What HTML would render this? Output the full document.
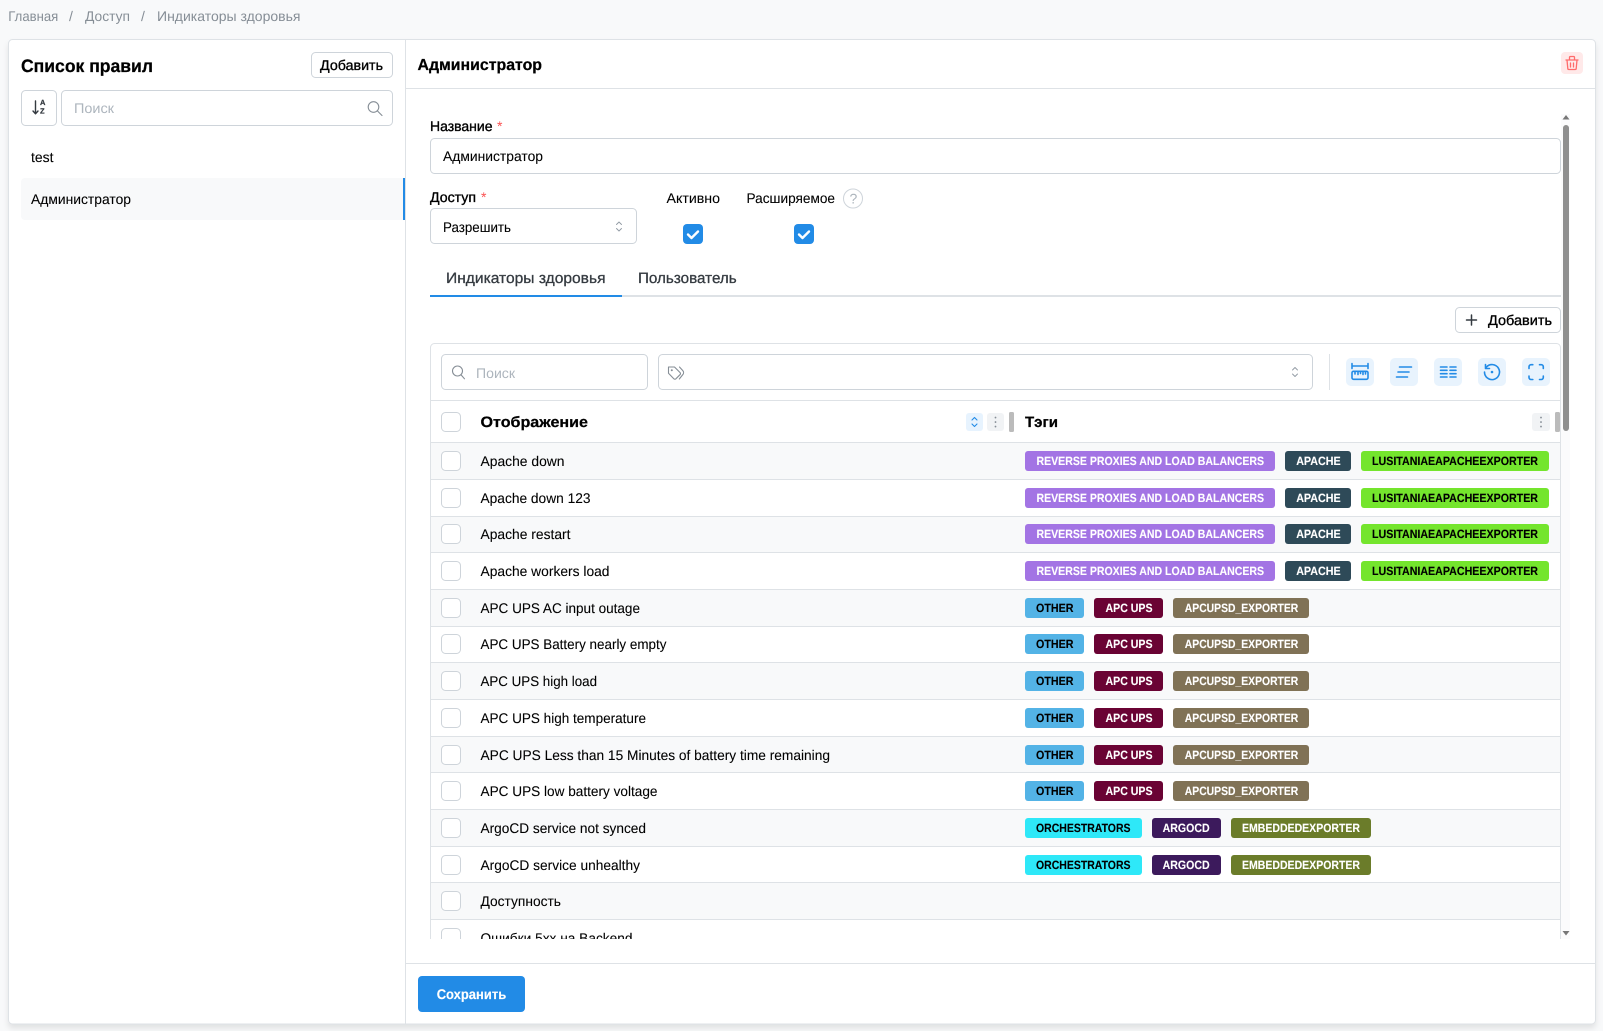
<!DOCTYPE html>
<html lang="ru"><head><meta charset="utf-8"><title>Индикаторы здоровья</title>
<style>
html,body{margin:0;padding:0;background:#f8f9fa;width:1603px;height:1031px;overflow:hidden}
svg{display:block}
text{font-family:"Liberation Sans",sans-serif;font-size:14px;fill:#000;stroke:#000;stroke-width:.08;text-rendering:geometricPrecision}
.g{fill:#868e96;stroke:none}.p{fill:#adb5bd;stroke:none}.m{stroke:#000;stroke-width:.35}.b{font-weight:700;stroke-width:.25}
.t{font-size:12px;font-weight:700;fill:#fff;stroke:#fff;stroke-width:.12}.k{fill:#000;stroke:#000}
.a{fill:#fa5252;stroke:none}.tb{font-size:15px;fill:#343a40;stroke:#343a40;stroke-width:.3}
.i{fill:none;stroke:#228be6;stroke-width:1.6;stroke-linecap:round;stroke-linejoin:round}
.n{fill:none;stroke:#868e96;stroke-width:1.1;stroke-linecap:round;stroke-linejoin:round}
.c{fill:none;stroke:#909aa3;stroke-width:.9;stroke-linecap:round;stroke-linejoin:round}
.f{fill:#fff;stroke:#ced4da}.l{fill:#dee2e6}.z{fill:#f8f9fa}
</style></head><body>
<svg xmlns="http://www.w3.org/2000/svg" width="1603" height="1031" viewBox="0 0 1603 1031">
<defs><clipPath id="c"><rect x="430" y="343" width="1131" height="596"/></clipPath></defs>

<!-- breadcrumbs -->
<text class="g" x="8.3" y="21" textLength="50" lengthAdjust="spacingAndGlyphs">Главная</text>
<text class="g" x="69" y="21">/</text>
<text class="g" x="85" y="21" textLength="45" lengthAdjust="spacingAndGlyphs">Доступ</text>
<text class="g" x="141" y="21">/</text>
<text class="g" x="157" y="21" textLength="143.500" lengthAdjust="spacingAndGlyphs">Индикаторы здоровья</text>

<!-- panel -->
<rect x="8.5" y="39.500" width="1587" height="984.500" rx="4" fill="#fff" stroke="#dee2e6" style="filter:drop-shadow(0 4px 3px rgba(0,0,0,.09))"/>
<rect class="l" x="405" y="40" width="1" height="984"/>

<!-- left column -->
<text class="b k" style="font-size:18px" x="21" y="72" textLength="132" lengthAdjust="spacingAndGlyphs">Список правил</text>
<rect class="f" x="311.500" y="52.500" width="81" height="25" rx="4"/>
<text class="m" x="320" y="70" textLength="63" lengthAdjust="spacingAndGlyphs">Добавить</text>
<rect class="f" x="21.500" y="90.500" width="35" height="35" rx="4"/>
<path d="M35.500 101v12.500M33 111l2.500 2.800 2.500-2.800" fill="none" stroke="#343a40" stroke-width="1.400" stroke-linecap="round" stroke-linejoin="round"/>
<text class="b" style="font-size:7.500px;fill:#343a40;stroke:#343a40" x="40" y="105">A</text>
<text class="b" style="font-size:7.500px;fill:#343a40;stroke:#343a40" x="40" y="113.500">Z</text>
<rect class="f" x="61.500" y="90.500" width="331" height="35" rx="4"/>
<text class="p" x="74" y="113" textLength="40" lengthAdjust="spacingAndGlyphs">Поиск</text>
<circle class="n" cx="373.500" cy="107" r="5.300"/><path class="n" d="M377.500 111l4.500 4.500"/>
<text x="31" y="162" textLength="22.500" lengthAdjust="spacingAndGlyphs">test</text>
<path class="z" d="M25 178H405V220H25a4 4 0 0 1-4-4V182a4 4 0 0 1 4-4z"/>
<rect x="403" y="178" width="2" height="42" fill="#228be6"/>
<text x="31" y="204" textLength="100" lengthAdjust="spacingAndGlyphs">Администратор</text>

<!-- right header -->
<rect class="l" x="406" y="88" width="1189" height="1"/>
<text class="b" style="font-size:16px" x="417.500" y="70" textLength="124.500" lengthAdjust="spacingAndGlyphs">Администратор</text>
<rect x="1561" y="52" width="22" height="22" rx="4" fill="#ffe9e9"/>
<path d="M1566 60h12M1569.500 60v-2.500a1 1 0 0 1 1-1h3a1 1 0 0 1 1 1V60M1567 60l.8 8.500a1 1 0 0 0 1 1h6.400a1 1 0 0 0 1-1l.8-8.500M1570.500 63v4M1573.500 63v4" fill="none" stroke="#ff6b6b" stroke-width="1.300" stroke-linecap="round" stroke-linejoin="round"/>

<!-- form -->
<text class="m" x="430" y="131" textLength="62.500" lengthAdjust="spacingAndGlyphs">Название</text>
<text class="a" x="497" y="131">*</text>
<rect class="f" x="430.500" y="138.500" width="1130" height="35" rx="4"/>
<text x="443" y="161" textLength="100" lengthAdjust="spacingAndGlyphs">Администратор</text>
<text class="m" x="430" y="202" textLength="46" lengthAdjust="spacingAndGlyphs">Доступ</text>
<text class="a" x="481" y="202">*</text>
<rect class="f" x="430.500" y="208.500" width="206" height="35" rx="4"/>
<text x="443" y="232" textLength="68" lengthAdjust="spacingAndGlyphs">Разрешить</text>
<path class="c" d="M616.500 224.500l2.500-2.500 2.500 2.500M616.500 228.500l2.500 2.500 2.500-2.500"/>
<text x="666.500" y="203" textLength="53.500" lengthAdjust="spacingAndGlyphs">Активно</text>
<text x="746.500" y="203" textLength="88.500" lengthAdjust="spacingAndGlyphs">Расширяемое</text>
<circle cx="853" cy="198.500" r="9.500" fill="#fff" stroke="#ced4da"/>
<text class="p" x="849.500" y="203.500">?</text>
<rect x="683" y="224" width="20" height="20" rx="4" fill="#228be6"/>
<path d="M688 234.500l3.500 3.500 6.500-6.500" fill="none" stroke="#fff" stroke-width="2.400" stroke-linecap="round" stroke-linejoin="round"/>
<rect x="794" y="224" width="20" height="20" rx="4" fill="#228be6"/>
<path d="M799 234.500l3.500 3.500 6.500-6.500" fill="none" stroke="#fff" stroke-width="2.400" stroke-linecap="round" stroke-linejoin="round"/>

<!-- tabs -->
<text class="tb" x="446" y="283" textLength="159.500" lengthAdjust="spacingAndGlyphs">Индикаторы здоровья</text>
<text class="tb" x="638" y="283" textLength="98.700" lengthAdjust="spacingAndGlyphs">Пользователь</text>
<rect class="l" x="430" y="295" width="1131" height="2"/>
<rect x="430" y="295" width="192" height="2" fill="#228be6"/>

<!-- add -->
<rect class="f" x="1455.500" y="307.500" width="105" height="25" rx="4"/>
<path d="M1466.500 320h10M1471.500 315v10" stroke="#343a40" stroke-width="1.500" stroke-linecap="round"/>
<text class="m" x="1488" y="325" textLength="64" lengthAdjust="spacingAndGlyphs">Добавить</text>

<!-- table -->
<g clip-path="url(#c)">
<rect x="430.500" y="343.500" width="1130" height="700" rx="4" fill="#fff" stroke="#dee2e6"/>
<rect class="f" x="441.500" y="354.500" width="206" height="35" rx="4"/>
<circle class="n" cx="457.500" cy="371" r="5"/><path class="n" d="M461.200 375l3.300 3.800"/>
<text class="p" x="476" y="378" textLength="39" lengthAdjust="spacingAndGlyphs">Поиск</text>
<rect class="f" x="658.500" y="354.500" width="654" height="35" rx="4"/>
<path class="n" d="M668.500 367h6l5.500 5.500a1.500 1.500 0 0 1 0 2.200l-4 4a1.500 1.500 0 0 1-2.200 0l-5.300-5.500zM679.500 367l3.300 3.600a3 3 0 0 1 0 4l-3.500 4.400"/>
<circle cx="671.800" cy="370.300" r="1" fill="#868e96"/>
<path class="c" d="M1292.500 370l2.500-2.500 2.500 2.500M1292.500 374l2.500 2.500 2.500-2.500"/>
<rect class="l" x="1329" y="354" width="1" height="36"/>

<rect x="1346" y="358" width="28" height="28" rx="5" fill="#e8f3fd"/>
<path class="i" d="M1352 363.500v5M1368 363.500v5M1352 366h16M1355 371.500v2.500M1358 371.500v3M1360.500 371.500v2M1363 371.500v3M1365.500 371.500v2.500"/>
<rect class="i" x="1352" y="371.300" width="16" height="8" rx="1.500"/>
<rect x="1390" y="358" width="28" height="28" rx="5" fill="#e8f3fd"/>
<path class="i" d="M1399.500 367h12M1398 372h11M1396.500 377h11"/>
<rect x="1434" y="358" width="28" height="28" rx="5" fill="#e8f3fd"/>
<path class="i" d="M1440.500 367h6.500M1440.500 370.300h6.500M1440.500 373.700h6.500M1440.500 377h6.500M1450 367h6M1450 370.300h6M1450 373.700h6M1450 377h6"/>
<rect x="1478" y="358" width="28" height="28" rx="5" fill="#e8f3fd"/>
<path class="i" d="M1486.500 367a7.500 7.500 0 1 1-2 5M1485.500 364.500v4h4"/>
<circle cx="1492" cy="372" r="1.300" fill="#228be6"/>
<rect x="1522" y="358" width="28" height="28" rx="5" fill="#e8f3fd"/>
<path class="i" d="M1529 368.500v-1.800a2 2 0 0 1 2-2h1.800M1539.500 364.700h1.800a2 2 0 0 1 2 2v1.800M1543.300 376v1.500a2 2 0 0 1-2 2h-1.800M1532.800 379.500H1531a2 2 0 0 1-2-2V376"/>

<rect class="l" x="431" y="400" width="1129" height="1"/>
<rect class="f" x="441.500" y="412.500" width="19" height="19" rx="4"/>
<text class="b k" style="font-size:15px" x="480.500" y="427" textLength="107.500" lengthAdjust="spacingAndGlyphs">Отображение</text>
<rect x="966" y="413" width="17" height="18" rx="3" fill="#e7f3fe"/>
<path d="M972 420l2.500-2.500 2.500 2.500M972 424l2.500 2.500 2.500-2.500" fill="none" stroke="#228be6" stroke-width="1.100" stroke-linecap="round" stroke-linejoin="round"/>
<rect x="987" y="413" width="17" height="18" rx="3" fill="#f1f3f5"/>
<path d="M995.500 417.500v.1M995.500 422v.1M995.500 426.500v.1" stroke="#868e96" stroke-width="1.800" stroke-linecap="round"/>
<rect x="1009" y="412" width="5" height="20" rx="1.500" fill="#bbb"/>
<text class="b k" style="font-size:15px" x="1025" y="427" textLength="33" lengthAdjust="spacingAndGlyphs">Тэги</text>
<rect x="1532" y="413" width="18" height="18" rx="3" fill="#f1f3f5"/>
<path d="M1541 417.500v.1M1541 422v.1M1541 426.500v.1" stroke="#868e96" stroke-width="1.800" stroke-linecap="round"/>
<rect x="1555" y="412" width="5" height="20" rx="1.500" fill="#bbb"/>

<!-- stripes and lines -->
<rect class="z" x="431" y="443" width="1129" height="36"/>
<rect class="z" x="431" y="517" width="1129" height="35"/>
<rect class="z" x="431" y="590" width="1129" height="36"/>
<rect class="z" x="431" y="663" width="1129" height="36"/>
<rect class="z" x="431" y="737" width="1129" height="35"/>
<rect class="z" x="431" y="810" width="1129" height="36"/>
<rect class="z" x="431" y="883" width="1129" height="36"/>
<rect class="l" x="431" y="442" width="1129" height="1"/>
<rect class="l" x="431" y="479" width="1129" height="1"/>
<rect class="l" x="431" y="516" width="1129" height="1"/>
<rect class="l" x="431" y="552" width="1129" height="1"/>
<rect class="l" x="431" y="589" width="1129" height="1"/>
<rect class="l" x="431" y="626" width="1129" height="1"/>
<rect class="l" x="431" y="662" width="1129" height="1"/>
<rect class="l" x="431" y="699" width="1129" height="1"/>
<rect class="l" x="431" y="736" width="1129" height="1"/>
<rect class="l" x="431" y="772" width="1129" height="1"/>
<rect class="l" x="431" y="809" width="1129" height="1"/>
<rect class="l" x="431" y="846" width="1129" height="1"/>
<rect class="l" x="431" y="882" width="1129" height="1"/>
<rect class="l" x="431" y="919" width="1129" height="1"/>

<!-- rows -->
<g transform="translate(0,451)"><rect class="f" x="441.500" y=".5" width="19" height="19" rx="4"/><text x="480.500" y="15" textLength="84" lengthAdjust="spacingAndGlyphs">Apache down</text>
<rect x="1025" width="250" height="20" rx="3" fill="#a374e4"/><text class="t" x="1036.500" y="14" textLength="227.500" lengthAdjust="spacingAndGlyphs">REVERSE PROXIES AND LOAD BALANCERS</text>
<rect x="1285" width="66" height="20" rx="3" fill="#2e4a58"/><text class="t" x="1296.200" y="14" textLength="44.500" lengthAdjust="spacingAndGlyphs">APACHE</text>
<rect x="1361" width="188" height="20" rx="3" fill="#74e52d"/><text class="t k" x="1372" y="14" textLength="166" lengthAdjust="spacingAndGlyphs">LUSITANIAEAPACHEEXPORTER</text></g>

<g transform="translate(0,488)"><rect class="f" x="441.500" y=".5" width="19" height="19" rx="4"/><text x="480.500" y="15" textLength="110" lengthAdjust="spacingAndGlyphs">Apache down 123</text>
<rect x="1025" width="250" height="20" rx="3" fill="#a374e4"/><text class="t" x="1036.500" y="14" textLength="227.500" lengthAdjust="spacingAndGlyphs">REVERSE PROXIES AND LOAD BALANCERS</text>
<rect x="1285" width="66" height="20" rx="3" fill="#2e4a58"/><text class="t" x="1296.200" y="14" textLength="44.500" lengthAdjust="spacingAndGlyphs">APACHE</text>
<rect x="1361" width="188" height="20" rx="3" fill="#74e52d"/><text class="t k" x="1372" y="14" textLength="166" lengthAdjust="spacingAndGlyphs">LUSITANIAEAPACHEEXPORTER</text></g>

<g transform="translate(0,524)"><rect class="f" x="441.500" y=".5" width="19" height="19" rx="4"/><text x="480.500" y="15" textLength="90" lengthAdjust="spacingAndGlyphs">Apache restart</text>
<rect x="1025" width="250" height="20" rx="3" fill="#a374e4"/><text class="t" x="1036.500" y="14" textLength="227.500" lengthAdjust="spacingAndGlyphs">REVERSE PROXIES AND LOAD BALANCERS</text>
<rect x="1285" width="66" height="20" rx="3" fill="#2e4a58"/><text class="t" x="1296.200" y="14" textLength="44.500" lengthAdjust="spacingAndGlyphs">APACHE</text>
<rect x="1361" width="188" height="20" rx="3" fill="#74e52d"/><text class="t k" x="1372" y="14" textLength="166" lengthAdjust="spacingAndGlyphs">LUSITANIAEAPACHEEXPORTER</text></g>

<g transform="translate(0,561)"><rect class="f" x="441.500" y=".5" width="19" height="19" rx="4"/><text x="480.500" y="15" textLength="129" lengthAdjust="spacingAndGlyphs">Apache workers load</text>
<rect x="1025" width="250" height="20" rx="3" fill="#a374e4"/><text class="t" x="1036.500" y="14" textLength="227.500" lengthAdjust="spacingAndGlyphs">REVERSE PROXIES AND LOAD BALANCERS</text>
<rect x="1285" width="66" height="20" rx="3" fill="#2e4a58"/><text class="t" x="1296.200" y="14" textLength="44.500" lengthAdjust="spacingAndGlyphs">APACHE</text>
<rect x="1361" width="188" height="20" rx="3" fill="#74e52d"/><text class="t k" x="1372" y="14" textLength="166" lengthAdjust="spacingAndGlyphs">LUSITANIAEAPACHEEXPORTER</text></g>

<g transform="translate(0,598)"><rect class="f" x="441.500" y=".5" width="19" height="19" rx="4"/><text x="480.500" y="15" textLength="159.500" lengthAdjust="spacingAndGlyphs">APC UPS AC input outage</text>
<rect x="1025" width="59" height="20" rx="3" fill="#53b3e6"/><text class="t k" x="1036" y="14" textLength="37.500" lengthAdjust="spacingAndGlyphs">OTHER</text>
<rect x="1094" width="69" height="20" rx="3" fill="#6a0334"/><text class="t" x="1105.500" y="14" textLength="47" lengthAdjust="spacingAndGlyphs">APC UPS</text>
<rect x="1173" width="136" height="20" rx="3" fill="#807256"/><text class="t" x="1184.800" y="14" textLength="113.500" lengthAdjust="spacingAndGlyphs">APCUPSD_EXPORTER</text></g>

<g transform="translate(0,634)"><rect class="f" x="441.500" y=".5" width="19" height="19" rx="4"/><text x="480.500" y="15" textLength="186" lengthAdjust="spacingAndGlyphs">APC UPS Battery nearly empty</text>
<rect x="1025" width="59" height="20" rx="3" fill="#53b3e6"/><text class="t k" x="1036" y="14" textLength="37.500" lengthAdjust="spacingAndGlyphs">OTHER</text>
<rect x="1094" width="69" height="20" rx="3" fill="#6a0334"/><text class="t" x="1105.500" y="14" textLength="47" lengthAdjust="spacingAndGlyphs">APC UPS</text>
<rect x="1173" width="136" height="20" rx="3" fill="#807256"/><text class="t" x="1184.800" y="14" textLength="113.500" lengthAdjust="spacingAndGlyphs">APCUPSD_EXPORTER</text></g>

<g transform="translate(0,671)"><rect class="f" x="441.500" y=".5" width="19" height="19" rx="4"/><text x="480.500" y="15" textLength="116.500" lengthAdjust="spacingAndGlyphs">APC UPS high load</text>
<rect x="1025" width="59" height="20" rx="3" fill="#53b3e6"/><text class="t k" x="1036" y="14" textLength="37.500" lengthAdjust="spacingAndGlyphs">OTHER</text>
<rect x="1094" width="69" height="20" rx="3" fill="#6a0334"/><text class="t" x="1105.500" y="14" textLength="47" lengthAdjust="spacingAndGlyphs">APC UPS</text>
<rect x="1173" width="136" height="20" rx="3" fill="#807256"/><text class="t" x="1184.800" y="14" textLength="113.500" lengthAdjust="spacingAndGlyphs">APCUPSD_EXPORTER</text></g>

<g transform="translate(0,708)"><rect class="f" x="441.500" y=".5" width="19" height="19" rx="4"/><text x="480.500" y="15" textLength="165.500" lengthAdjust="spacingAndGlyphs">APC UPS high temperature</text>
<rect x="1025" width="59" height="20" rx="3" fill="#53b3e6"/><text class="t k" x="1036" y="14" textLength="37.500" lengthAdjust="spacingAndGlyphs">OTHER</text>
<rect x="1094" width="69" height="20" rx="3" fill="#6a0334"/><text class="t" x="1105.500" y="14" textLength="47" lengthAdjust="spacingAndGlyphs">APC UPS</text>
<rect x="1173" width="136" height="20" rx="3" fill="#807256"/><text class="t" x="1184.800" y="14" textLength="113.500" lengthAdjust="spacingAndGlyphs">APCUPSD_EXPORTER</text></g>

<g transform="translate(0,745)"><rect class="f" x="441.500" y=".5" width="19" height="19" rx="4"/><text x="480.500" y="15" textLength="349.500" lengthAdjust="spacingAndGlyphs">APC UPS Less than 15 Minutes of battery time remaining</text>
<rect x="1025" width="59" height="20" rx="3" fill="#53b3e6"/><text class="t k" x="1036" y="14" textLength="37.500" lengthAdjust="spacingAndGlyphs">OTHER</text>
<rect x="1094" width="69" height="20" rx="3" fill="#6a0334"/><text class="t" x="1105.500" y="14" textLength="47" lengthAdjust="spacingAndGlyphs">APC UPS</text>
<rect x="1173" width="136" height="20" rx="3" fill="#807256"/><text class="t" x="1184.800" y="14" textLength="113.500" lengthAdjust="spacingAndGlyphs">APCUPSD_EXPORTER</text></g>

<g transform="translate(0,781)"><rect class="f" x="441.500" y=".5" width="19" height="19" rx="4"/><text x="480.500" y="15" textLength="177" lengthAdjust="spacingAndGlyphs">APC UPS low battery voltage</text>
<rect x="1025" width="59" height="20" rx="3" fill="#53b3e6"/><text class="t k" x="1036" y="14" textLength="37.500" lengthAdjust="spacingAndGlyphs">OTHER</text>
<rect x="1094" width="69" height="20" rx="3" fill="#6a0334"/><text class="t" x="1105.500" y="14" textLength="47" lengthAdjust="spacingAndGlyphs">APC UPS</text>
<rect x="1173" width="136" height="20" rx="3" fill="#807256"/><text class="t" x="1184.800" y="14" textLength="113.500" lengthAdjust="spacingAndGlyphs">APCUPSD_EXPORTER</text></g>

<g transform="translate(0,818)"><rect class="f" x="441.500" y=".5" width="19" height="19" rx="4"/><text x="480.500" y="15" textLength="165.500" lengthAdjust="spacingAndGlyphs">ArgoCD service not synced</text>
<rect x="1025" width="117" height="20" rx="3" fill="#2ee8f8"/><text class="t k" x="1036" y="14" textLength="94.500" lengthAdjust="spacingAndGlyphs">ORCHESTRATORS</text>
<rect x="1152" width="69" height="20" rx="3" fill="#3c1a5c"/><text class="t" x="1162.600" y="14" textLength="47" lengthAdjust="spacingAndGlyphs">ARGOCD</text>
<rect x="1231" width="140" height="20" rx="3" fill="#6b7c2a"/><text class="t" x="1242" y="14" textLength="118" lengthAdjust="spacingAndGlyphs">EMBEDDEDEXPORTER</text></g>

<g transform="translate(0,855)"><rect class="f" x="441.500" y=".5" width="19" height="19" rx="4"/><text x="480.500" y="15" textLength="159.500" lengthAdjust="spacingAndGlyphs">ArgoCD service unhealthy</text>
<rect x="1025" width="117" height="20" rx="3" fill="#2ee8f8"/><text class="t k" x="1036" y="14" textLength="94.500" lengthAdjust="spacingAndGlyphs">ORCHESTRATORS</text>
<rect x="1152" width="69" height="20" rx="3" fill="#3c1a5c"/><text class="t" x="1162.600" y="14" textLength="47" lengthAdjust="spacingAndGlyphs">ARGOCD</text>
<rect x="1231" width="140" height="20" rx="3" fill="#6b7c2a"/><text class="t" x="1242" y="14" textLength="118" lengthAdjust="spacingAndGlyphs">EMBEDDEDEXPORTER</text></g>

<g transform="translate(0,891)"><rect class="f" x="441.500" y=".5" width="19" height="19" rx="4"/><text x="480.500" y="15" textLength="80.500" lengthAdjust="spacingAndGlyphs">Доступность</text></g>
<g transform="translate(0,928)"><rect class="f" x="441.500" y=".5" width="19" height="19" rx="4"/><text x="480.500" y="15" textLength="152" lengthAdjust="spacingAndGlyphs">Ошибки 5xx на Backend</text></g>
</g>

<!-- scrollbar -->
<rect x="1561" y="114" width="9" height="825" fill="#fbfbfc"/>
<path d="M1566 115l3.500 4.500h-7z" fill="#777"/>
<rect x="1563" y="125" width="6" height="306" rx="3" fill="#8f8f8f"/>
<path d="M1566 935.500l-3.500-4.500h7z" fill="#777"/>

<!-- footer -->
<rect class="l" x="406" y="963" width="1189" height="1"/>
<rect x="418" y="976" width="107" height="36" rx="4" fill="#228be6"/>
<text class="b" style="fill:#fff;stroke:#fff;stroke-width:.15" x="436.700" y="999" textLength="69.500" lengthAdjust="spacingAndGlyphs">Сохранить</text>
</svg>
</body></html>
